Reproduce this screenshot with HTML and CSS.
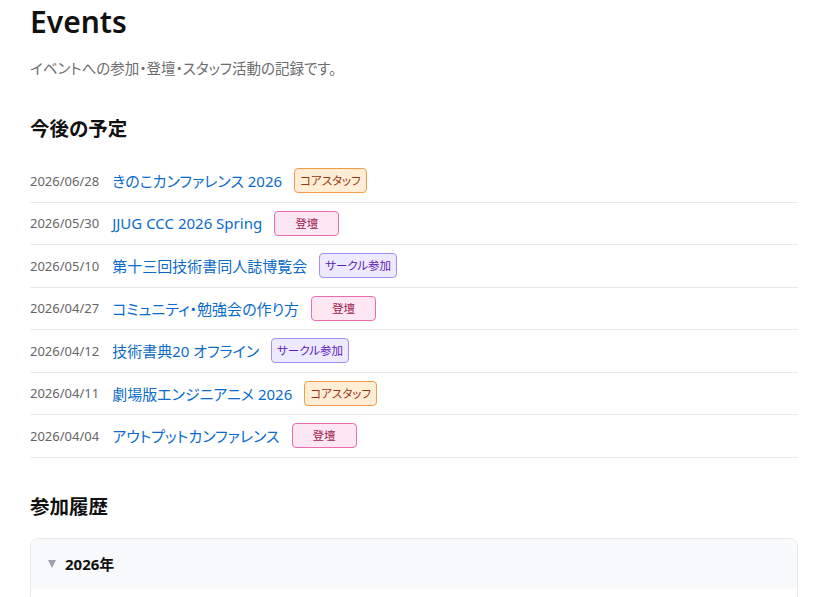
FILE: index.html
```html
<!DOCTYPE html>
<html lang="ja">
<head>
<meta charset="utf-8">
<title>Events</title>
<link rel="stylesheet" href="styles.css">
</head>
<body>
<main class="page">
  <h1 class="title">Events</h1>
  <p class="lead">イベントへの参加・登壇・スタッフ活動の記録です。</p>

  <h2 class="section-title">今後の予定</h2>
  <ul class="event-list">
    <li class="event"><span class="date">2026/06/28</span><a class="name" href="#">きのこカンファレンス 2026</a><span class="badge staff">コアスタッフ</span></li>
    <li class="event"><span class="date">2026/05/30</span><a class="name" href="#">JJUG CCC 2026 Spring</a><span class="badge talk">登壇</span></li>
    <li class="event"><span class="date">2026/05/10</span><a class="name" href="#">第十三回技術書同人誌博覧会</a><span class="badge circle">サークル参加</span></li>
    <li class="event"><span class="date">2026/04/27</span><a class="name" href="#">コミュニティ・勉強会の作り方</a><span class="badge talk">登壇</span></li>
    <li class="event"><span class="date">2026/04/12</span><a class="name" href="#">技術書典20 オフライン</a><span class="badge circle">サークル参加</span></li>
    <li class="event"><span class="date">2026/04/11</span><a class="name" href="#">劇場版エンジニアニメ 2026</a><span class="badge staff">コアスタッフ</span></li>
    <li class="event"><span class="date">2026/04/04</span><a class="name" href="#">アウトプットカンファレンス</a><span class="badge talk">登壇</span></li>
  </ul>

  <h2 class="section-title history-title">参加履歴</h2>
  <details class="year" open>
    <summary class="year-summary">2026年</summary>
    <div class="year-body"></div>
  </details>
</main>
</body>
</html>
```

FILE: styles.css
```css
html, body {
  margin: 0;
  padding: 0;
  background: #ffffff;
}

body {
  font-family: "Noto Sans", "Noto Sans CJK JP", sans-serif;
  font-feature-settings: "palt";
  color: #111;
}

.page {
  width: 768px;
  padding: 0 0 0 30px;
}

.title {
  margin: 0;
  padding-top: 2px;
  font-size: 30px;
  font-weight: 600;
  line-height: 40px;
}

.lead {
  margin: 14px 0 0;
  font-size: 14.5px;
  line-height: 24px;
  color: #6b6b6b;
}

.section-title {
  margin: 35px 0 0;
  font-size: 19.5px;
  font-weight: 700;
  line-height: 28px;
}

.event-list {
  list-style: none;
  margin: 17px 0 0;
  padding: 0;
}

.event {
  display: flex;
  align-items: center;
  gap: 12px;
  height: 41.5px;
  border-bottom: 1px solid #e9e9e9;
}

.date {
  font-size: 13px;
  color: #666;
  margin-right: 1px;
}

.name {
  font-size: 15px;
  color: #0b6bcb;
  text-decoration: none;
}

.badge {
  box-sizing: border-box;
  min-width: 65px;
  height: 25px;
  padding: 0 5px;
  border: 1px solid;
  border-radius: 4px;
  font-size: 11.5px;
  line-height: 23px;
  text-align: center;
}

.badge.staff {
  background: #ffedd5;
  border-color: #f59a45;
  color: #9a3412;
}

.badge.talk {
  background: #fce7f3;
  border-color: #ec6ab0;
  color: #9d174d;
}

.badge.circle {
  background: #ede9fe;
  border-color: #a78bfa;
  color: #5b21b6;
}

.history-title {
  margin-top: 35px;
}

.year {
  margin-top: 17px;
  border: 1px solid #e8e8ea;
  border-radius: 8px;
  overflow: hidden;
}

.year-summary {
  list-style: none;
  display: flex;
  align-items: center;
  gap: 9px;
  height: 50px;
  padding: 0 17px;
  background: #f8f9fb;
  font-size: 15px;
  font-weight: 700;
  cursor: pointer;
}

.year-summary::-webkit-details-marker {
  display: none;
}

.year-summary::before {
  content: "";
  width: 0;
  height: 0;
  border-left: 4px solid transparent;
  border-right: 4px solid transparent;
  border-top: 8px solid #9ca3af;
}

.year-body {
  height: 60px;
  background: #fff;
}
```
